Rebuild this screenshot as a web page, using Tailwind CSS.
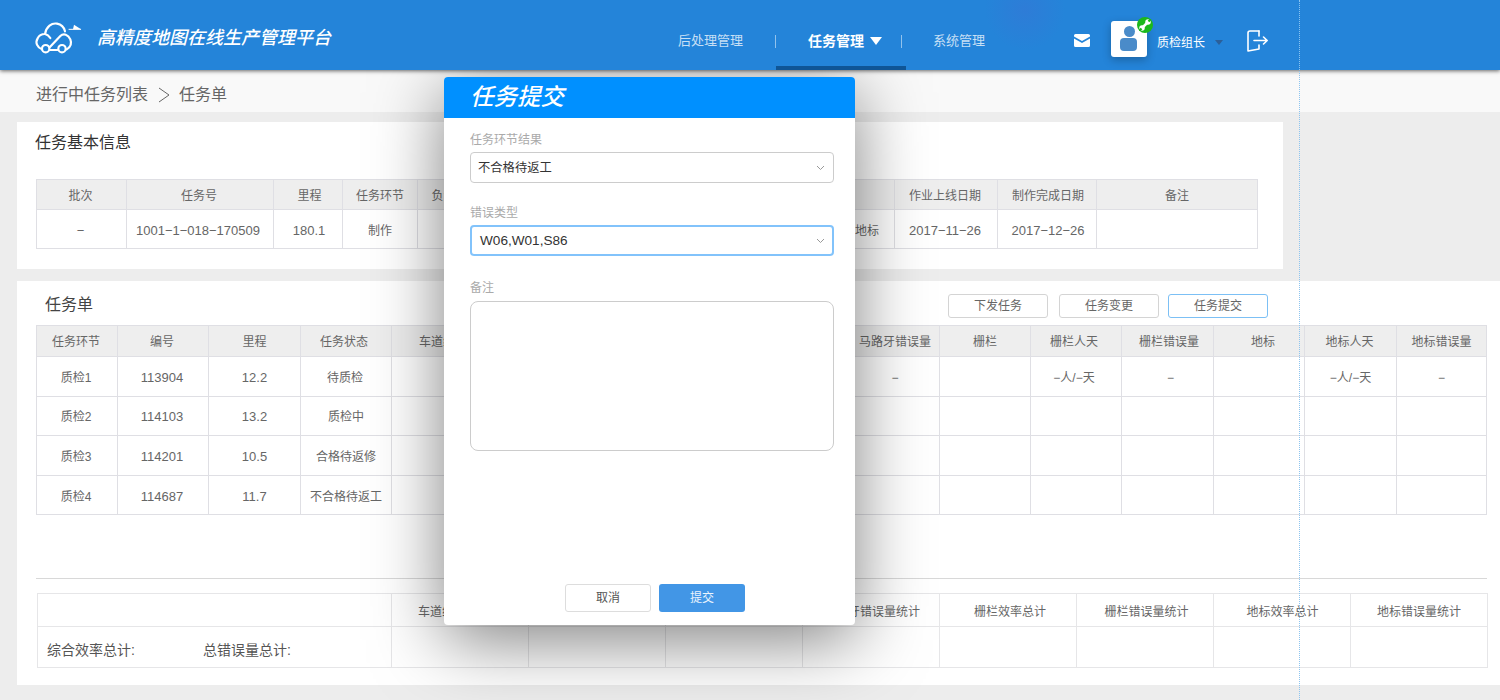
<!DOCTYPE html>
<html>
<head>
  <meta charset="utf-8">
  <title>高精度地图在线生产管理平台</title>
  <script src="https://cdn.jsdelivr.net/npm/@tailwindcss/browser@4"></script>
</head>
<body class="font-['Liberation_Sans','Noto_Sans_CJK_SC',sans-serif] bg-[#ededed]">
  <div class="relative w-[1500px] h-[700px] overflow-hidden">

    <!-- Header -->
    <header class="relative z-20 h-[70px] bg-[#2484d9] shadow-[0_1px_4px_rgba(0,0,0,0.6)] flex items-center text-white">
      <div class="absolute left-[985px] top-[-30px] w-[80px] h-[80px] bg-[radial-gradient(closest-side,#2e7cd7,transparent)]"></div>
      <svg class="relative ml-[33px] mt-[4px] w-[50px] h-[35px]" viewBox="40 30 150 105" fill="none" stroke="#fff" stroke-width="6.5" stroke-linecap="round" stroke-linejoin="round">
        <path d="M67 118 C52 112 46 98 54 85 C58 76 66 72 76 72 C80 50 96 38 112 41 C124 43 133 52 136 64"/>
        <path d="M90 112 L122 78 C132 68 146 74 152 88 C156 98 154 110 141 118"/>
        <path d="M76 72 C84 74 88 78 92 84"/>
        <path d="M91 120 L114 120"/>
        <circle cx="78" cy="116" r="11"/>
        <circle cx="127" cy="116" r="11"/>
        <path d="M148 58 L183 58" stroke-width="3"/>
        <path d="M163 44 L184 58 L160 58 Z" fill="#fff" stroke="none"/>
      </svg>
      <h1 class="relative ml-[14px] mt-[6px] text-[18px] leading-none italic font-medium">高精度地图在线生产管理平台</h1>

      <nav class="absolute left-[678px] top-0 h-[70px] flex items-center">
        <a class="mt-[12px] text-[13px] text-white/75">后处理管理</a>
        <span class="mt-[12px] ml-[32px] w-px h-[13px] bg-white/50"></span>
        <div class="relative ml-[32px] mt-[12px] flex items-center font-bold text-[14px]">
          任务管理
          <span class="ml-[6px] w-0 h-0 border-x-[6px] border-x-transparent border-t-[8px] border-t-white"></span>
          <span class="absolute left-[-32px] top-[35px] w-[130px] h-[4px] bg-[#0f5596]"></span>
        </div>
        <span class="mt-[12px] ml-[19px] w-px h-[13px] bg-white/50"></span>
        <a class="mt-[12px] ml-[31px] text-[13px] text-white/75">系统管理</a>
      </nav>

      <div class="absolute left-[1074px] top-0 h-[70px] flex items-center">
        <svg class="mt-[11px] w-[16px] h-[13px]" viewBox="0 0 16 13" fill="#fff">
          <path d="M1.5 0h13A1.5 1.5 0 0 1 16 1.5V2.6L8 7 0 2.6V1.5A1.5 1.5 0 0 1 1.5 0z"/>
          <path d="M0 4.6 8 9l8-4.4v6.9A1.5 1.5 0 0 1 14.500 13h-13A1.500 1.500 0 0 1 0 11.500z"/>
        </svg>
        <div class="relative ml-[21px] mt-[8px] w-[36px] h-[36px] rounded-[3px] bg-white shadow-[0_3px_8px_rgba(0,0,0,0.25)]">
          <span class="absolute left-[13px] top-[5px] w-[11px] h-[11px] rounded-full bg-[#4a8bc9]"></span>
          <span class="absolute left-[9px] top-[17px] w-[17px] h-[13px] rounded-[4px] bg-[#4a8bc9]"></span>
          <span class="absolute left-[26px] top-[-4px] w-[16px] h-[16px] rounded-full bg-[#1cb81c] flex items-center justify-center">
            <svg class="w-[12px] h-[12px]" viewBox="0 0 24 24">
              <path d="M7 17 L17 7" stroke="#fff" stroke-width="5"/>
              <circle cx="18" cy="6" r="5.500" fill="#fff"/>
              <circle cx="6" cy="18" r="5.500" fill="#fff"/>
              <path d="M19 5 L24 0 M5 19 L0 24" stroke="#1cb81c" stroke-width="4.500"/>
            </svg>
          </span>
        </div>
        <span class="ml-[10px] mt-[16px] text-[12px] leading-none text-white">质检组长</span>
        <span class="ml-[10px] mt-[14px] w-0 h-0 border-x-[4px] border-x-transparent border-t-[5px] border-t-[#2b5f99]"></span>
        <svg class="ml-[24px] mt-[11px] w-[22px] h-[22px]" viewBox="0 0 22 22" fill="none" stroke="#fff" stroke-width="1.600" stroke-linecap="round" stroke-linejoin="round">
          <path d="M12 1 H3 a2 2 0 0 0-2 2 V21 L12 19 V15"/>
          <path d="M12 1 V6"/>
          <path d="M7 10.500 H20 M16.500 7 L20.200 10.500 L16.500 14"/>
        </svg>
      </div>
    </header>

    <!-- Breadcrumb -->
    <div class="h-[42px] bg-[#f9f9f9] flex items-center pl-[36px] pt-[8px] text-[16px] text-[#666]">
      <span>进行中任务列表</span>
      <svg class="ml-[9px] mr-[8px] w-[14px] h-[16px]" viewBox="0 0 14 16" fill="none" stroke="#666" stroke-width="1"><path d="M2 1l10 7-10 7"/></svg>
      <span>任务单</span>
    </div>

    <!-- Basic info -->
    <section class="ml-[17px] mt-[10px] w-[1266px] h-[147px] bg-white pt-[11px] pl-[19px]">
      <h2 class="text-[16px] leading-[20px] ml-[-1px] text-[#333]">任务基本信息</h2>
      <table class="mt-[26px] w-[1221px] table-fixed border-collapse text-[12px] text-[#666] text-center">
        <colgroup>
          <col class="w-[90px]"><col class="w-[147px]"><col class="w-[69px]"><col class="w-[75px]"><col class="w-[64px]"><col class="w-[100px]"><col class="w-[100px]"><col class="w-[100px]"><col class="w-[113px]"><col class="w-[103px]"><col class="w-[99px]"><col class="w-[161px]">
        </colgroup>
        <thead>
          <tr class="h-[30px] bg-[#eee]">
            <th class="font-normal border border-[#dfdfe4] pt-[2px] pr-[2px]">批次</th>
            <th class="font-normal border border-[#dfdfe4] pt-[2px] pr-[2px]">任务号</th>
            <th class="font-normal border border-[#dfdfe4] pt-[2px] pl-[3px]">里程</th>
            <th class="font-normal border border-[#dfdfe4] pt-[2px]">任务环节</th>
            <th class="font-normal border border-[#dfdfe4] pt-[2px]">负责人</th>
            <th class="font-normal border border-[#dfdfe4] pt-[2px]"></th>
            <th class="font-normal border border-[#dfdfe4] pt-[2px]"></th>
            <th class="font-normal border border-[#dfdfe4] pt-[2px]"></th>
            <th class="font-normal border border-[#dfdfe4] pt-[2px]"></th>
            <th class="font-normal border border-[#dfdfe4] pt-[2px] pr-[2px]">作业上线日期</th>
            <th class="font-normal border border-[#dfdfe4] pt-[2px] pl-[2px]">制作完成日期</th>
            <th class="font-normal border border-[#dfdfe4] pt-[2px]">备注</th>
          </tr>
        </thead>
        <tbody>
          <tr class="h-[39px] text-[13px]">
            <td class="border border-[#dfdfe4] pt-[4px] pr-[2px]">−</td>
            <td class="border border-[#dfdfe4] pt-[4px] pr-[4px]">1001−1−018−170509</td>
            <td class="border border-[#dfdfe4] pt-[4px] pl-[2px]">180.1</td>
            <td class="border border-[#dfdfe4] pt-[4px] text-[12px]">制作</td>
            <td class="border border-[#dfdfe4] pt-[4px]"></td>
            <td class="border border-[#dfdfe4] pt-[4px]"></td>
            <td class="border border-[#dfdfe4] pt-[4px]"></td>
            <td class="border border-[#dfdfe4] pt-[4px]"></td>
            <td class="border border-[#dfdfe4] pt-[4px] text-[12px] pl-[58px]">地标</td>
            <td class="border border-[#dfdfe4] pt-[4px] pr-[2px]">2017−11−26</td>
            <td class="border border-[#dfdfe4] pt-[4px] pl-[2px]">2017−12−26</td>
            <td class="border border-[#dfdfe4] pt-[4px]"></td>
          </tr>
        </tbody>
      </table>
    </section>

    <!-- Task list -->
    <section class="ml-[17px] mt-[12px] h-[404px] bg-white pl-[19px] relative">
      <div class="h-[44px] flex items-center">
        <h2 class="ml-[9px] mt-[4px] text-[16px] text-[#444]">任务单</h2>
        <div class="ml-auto mr-[232px] mt-[6px] flex text-[12px] text-[#666]">
          <button class="w-[100px] h-[24px] rounded-[3px] border border-[#d4d4d4] bg-white">下发任务</button>
          <button class="ml-[11px] w-[100px] h-[24px] rounded-[3px] border border-[#d4d4d4] bg-white">任务变更</button>
          <button class="ml-[9px] w-[100px] h-[24px] rounded-[3px] border border-[#7cc0f5] bg-white">任务提交</button>
        </div>
      </div>
      <table class="w-[1450px] table-fixed border-collapse text-[12px] text-[#666] text-center">
        <colgroup>
          <col class="w-[81px]"><col class="w-[91px]"><col class="w-[92px]"><col class="w-[91px]"><col class="w-[91px]"><col class="w-[92px]"><col class="w-[91px]"><col class="w-[92px]"><col class="w-[91px]"><col class="w-[91px]"><col class="w-[91px]"><col class="w-[91px]"><col class="w-[92px]"><col class="w-[91px]"><col class="w-[92px]"><col class="w-[90px]">
        </colgroup>
        <thead>
          <tr class="h-[31px] bg-[#eee]">
            <th class="font-normal border border-[#dfdfe4] pt-[1px] pr-[2px]">任务环节</th>
            <th class="font-normal border border-[#dfdfe4] pt-[1px] pr-[2px]">编号</th>
            <th class="font-normal border border-[#dfdfe4] pt-[1px]">里程</th>
            <th class="font-normal border border-[#dfdfe4] pt-[1px] pr-[4px]">任务状态</th>
            <th class="font-normal border border-[#dfdfe4] pt-[1px]">车道线</th>
            <th class="font-normal border border-[#dfdfe4] pt-[1px]">车道线人天</th>
            <th class="font-normal border border-[#dfdfe4] pt-[1px]">车道线错误量</th>
            <th class="font-normal border border-[#dfdfe4] pt-[1px]">马路牙</th>
            <th class="font-normal border border-[#dfdfe4] pt-[1px]">马路牙人天</th>
            <th class="font-normal border border-[#dfdfe4] pt-[1px] pl-[2px]">马路牙错误量</th>
            <th class="font-normal border border-[#dfdfe4] pt-[1px]">栅栏</th>
            <th class="font-normal border border-[#dfdfe4] pt-[1px] pr-[4px]">栅栏人天</th>
            <th class="font-normal border border-[#dfdfe4] pt-[1px] pl-[3px]">栅栏错误量</th>
            <th class="font-normal border border-[#dfdfe4] pt-[1px] pl-[8px]">地标</th>
            <th class="font-normal border border-[#dfdfe4] pt-[1px] pr-[2px]">地标人天</th>
            <th class="font-normal border border-[#dfdfe4] pt-[1px]">地标错误量</th>
          </tr>
        </thead>
        <tbody>
          <tr class="h-[40px]">
            <td class="border border-[#dfdfe4] pt-[2px] pr-[2px]">质检1</td>
            <td class="border border-[#dfdfe4] pt-[2px] pr-[2px] text-[13px]">113904</td>
            <td class="border border-[#dfdfe4] pt-[2px] text-[13px]">12.2</td>
            <td class="border border-[#dfdfe4] pt-[2px] pr-[2px]">待质检</td>
            <td class="border border-[#dfdfe4]"></td>
            <td class="border border-[#dfdfe4]"></td>
            <td class="border border-[#dfdfe4]"></td>
            <td class="border border-[#dfdfe4]"></td>
            <td class="border border-[#dfdfe4]"></td>
            <td class="border border-[#dfdfe4] pt-[2px] pl-[2px]">−</td>
            <td class="border border-[#dfdfe4]"></td>
            <td class="border border-[#dfdfe4] pt-[2px] pr-[4px]">−人/−天</td>
            <td class="border border-[#dfdfe4] pt-[2px] pl-[6px]">−</td>
            <td class="border border-[#dfdfe4]"></td>
            <td class="border border-[#dfdfe4] pt-[2px]">−人/−天</td>
            <td class="border border-[#dfdfe4] pt-[2px]">−</td>
          </tr>
          <tr class="h-[39px]">
            <td class="border border-[#dfdfe4] pr-[2px] pt-[1px]">质检2</td>
            <td class="border border-[#dfdfe4] pr-[2px] pt-[1px] text-[13px]">114103</td>
            <td class="border border-[#dfdfe4] pt-[1px] text-[13px]">13.2</td>
            <td class="border border-[#dfdfe4] pt-[1px]">质检中</td>
            <td class="border border-[#dfdfe4]"></td><td class="border border-[#dfdfe4]"></td><td class="border border-[#dfdfe4]"></td><td class="border border-[#dfdfe4]"></td><td class="border border-[#dfdfe4]"></td><td class="border border-[#dfdfe4]"></td><td class="border border-[#dfdfe4]"></td><td class="border border-[#dfdfe4]"></td><td class="border border-[#dfdfe4]"></td><td class="border border-[#dfdfe4]"></td><td class="border border-[#dfdfe4]"></td><td class="border border-[#dfdfe4]"></td>
          </tr>
          <tr class="h-[40px]">
            <td class="border border-[#dfdfe4] pr-[2px] pt-[3px]">质检3</td>
            <td class="border border-[#dfdfe4] pr-[2px] pt-[3px] text-[13px]">114201</td>
            <td class="border border-[#dfdfe4] pt-[3px] text-[13px]">10.5</td>
            <td class="border border-[#dfdfe4] pt-[3px]">合格待返修</td>
            <td class="border border-[#dfdfe4]"></td><td class="border border-[#dfdfe4]"></td><td class="border border-[#dfdfe4]"></td><td class="border border-[#dfdfe4]"></td><td class="border border-[#dfdfe4]"></td><td class="border border-[#dfdfe4]"></td><td class="border border-[#dfdfe4]"></td><td class="border border-[#dfdfe4]"></td><td class="border border-[#dfdfe4]"></td><td class="border border-[#dfdfe4]"></td><td class="border border-[#dfdfe4]"></td><td class="border border-[#dfdfe4]"></td>
          </tr>
          <tr class="h-[39px]">
            <td class="border border-[#dfdfe4] pr-[2px] pt-[4px]">质检4</td>
            <td class="border border-[#dfdfe4] pr-[2px] pt-[4px] text-[13px]">114687</td>
            <td class="border border-[#dfdfe4] pt-[4px] text-[13px]">11.7</td>
            <td class="border border-[#dfdfe4] pt-[4px]">不合格待返工</td>
            <td class="border border-[#dfdfe4]"></td><td class="border border-[#dfdfe4]"></td><td class="border border-[#dfdfe4]"></td><td class="border border-[#dfdfe4]"></td><td class="border border-[#dfdfe4]"></td><td class="border border-[#dfdfe4]"></td><td class="border border-[#dfdfe4]"></td><td class="border border-[#dfdfe4]"></td><td class="border border-[#dfdfe4]"></td><td class="border border-[#dfdfe4]"></td><td class="border border-[#dfdfe4]"></td><td class="border border-[#dfdfe4]"></td>
          </tr>
        </tbody>
      </table>

      <div class="mt-[63px] w-[1451px] h-px bg-[#d8d8d8]"></div>

      <table class="mt-[14px] ml-[1px] w-[1450px] table-fixed border-collapse text-[12px] text-[#666] text-center">
        <colgroup>
          <col class="w-[354px]"><col class="w-[137px]"><col class="w-[137px]"><col class="w-[137px]"><col class="w-[137px]"><col class="w-[137px]"><col class="w-[137px]"><col class="w-[137px]"><col class="w-[137px]">
        </colgroup>
        <tbody>
          <tr class="h-[33px]">
            <td class="border border-[#e6e6e8]"></td>
            <td class="border border-[#e6e6e8] pt-[3px]">车道线效率总计</td>
            <td class="border border-[#e6e6e8] pt-[3px]">车道线错误量统计</td>
            <td class="border border-[#e6e6e8] pt-[3px]">马路牙效率总计</td>
            <td class="border border-[#e6e6e8] pt-[3px] pl-[2px]">马路牙错误量统计</td>
            <td class="border border-[#e6e6e8] pt-[3px] pl-[4px]">栅栏效率总计</td>
            <td class="border border-[#e6e6e8] pt-[3px] pl-[3px]">栅栏错误量统计</td>
            <td class="border border-[#e6e6e8] pt-[3px] pl-[1px]">地标效率总计</td>
            <td class="border border-[#e6e6e8] pt-[3px]">地标错误量统计</td>
          </tr>
          <tr class="h-[41px]">
            <td class="border border-[#e6e6e8] text-left pl-[9px] pt-[6px] text-[14px] text-[#555]">
              <span class="inline-block w-[156px]">综合效率总计:</span><span>总错误量总计:</span>
            </td>
            <td class="border border-[#e6e6e8]"></td><td class="border border-[#e6e6e8]"></td><td class="border border-[#e6e6e8]"></td><td class="border border-[#e6e6e8]"></td><td class="border border-[#e6e6e8]"></td><td class="border border-[#e6e6e8]"></td><td class="border border-[#e6e6e8]"></td><td class="border border-[#e6e6e8]"></td>
          </tr>
        </tbody>
      </table>
    </section>

    <!-- Guide line -->
    <div class="absolute z-30 left-[1299px] top-0 h-[700px] border-l border-dotted border-[#8cc4f0]"></div>

    <!-- Modal -->
    <div class="absolute z-10 left-[444px] top-[77px] w-[411px] h-[548px] bg-white rounded-[4px] shadow-[0_15px_70px_rgba(0,0,0,0.5)] flex flex-col">
      <div class="h-[41px] shrink-0 bg-[#0090ff] rounded-t-[4px] pl-[26px] flex items-center">
        <h3 class="text-[23.5px] leading-none italic font-medium text-white">任务提交</h3>
      </div>
      <form class="pl-[26px] pr-[21px] flex flex-col flex-1">
        <label class="mt-[15px] text-[12px] leading-[14px] text-[#aaa]">任务环节结果</label>
        <div class="mt-[5px] h-[31px] rounded-[4px] border border-[#ccc] pl-[7px] pr-[8px] pt-[1px] flex items-center justify-between text-[12.3px] text-[#333]">
          <span>不合格待返工</span>
          <svg class="w-[9px] h-[6px]" viewBox="0 0 9 6" fill="none" stroke="#999" stroke-width="1"><path d="M1 1l3.500 3.500L8 1"/></svg>
        </div>
        <label class="mt-[23px] text-[12px] leading-[14px] text-[#aaa]">错误类型</label>
        <div class="mt-[5px] h-[31px] rounded-[4px] border-2 border-[#82c3fb] pl-[8px] pr-[7px] pt-[1px] flex items-center justify-between text-[13.6px] text-[#333]">
          <span>W06,W01,S86</span>
          <svg class="w-[9px] h-[6px]" viewBox="0 0 9 6" fill="none" stroke="#999" stroke-width="1"><path d="M1 1l3.500 3.500L8 1"/></svg>
        </div>
        <label class="mt-[25px] text-[12px] leading-[14px] text-[#aaa]">备注</label>
        <div class="mt-[6px] h-[150px] rounded-[8px] border border-[#ccc]"></div>
        <div class="mt-[133px] pl-[6px] flex justify-center text-[12px]">
          <button type="button" class="w-[86px] h-[28px] rounded-[3px] border border-[#ddd] bg-white text-[#555]">取消</button>
          <button type="button" class="ml-[8px] w-[86px] h-[28px] rounded-[3px] bg-[#4296e6] text-white/90">提交</button>
        </div>
      </form>
    </div>

  </div>
</body>
</html>
